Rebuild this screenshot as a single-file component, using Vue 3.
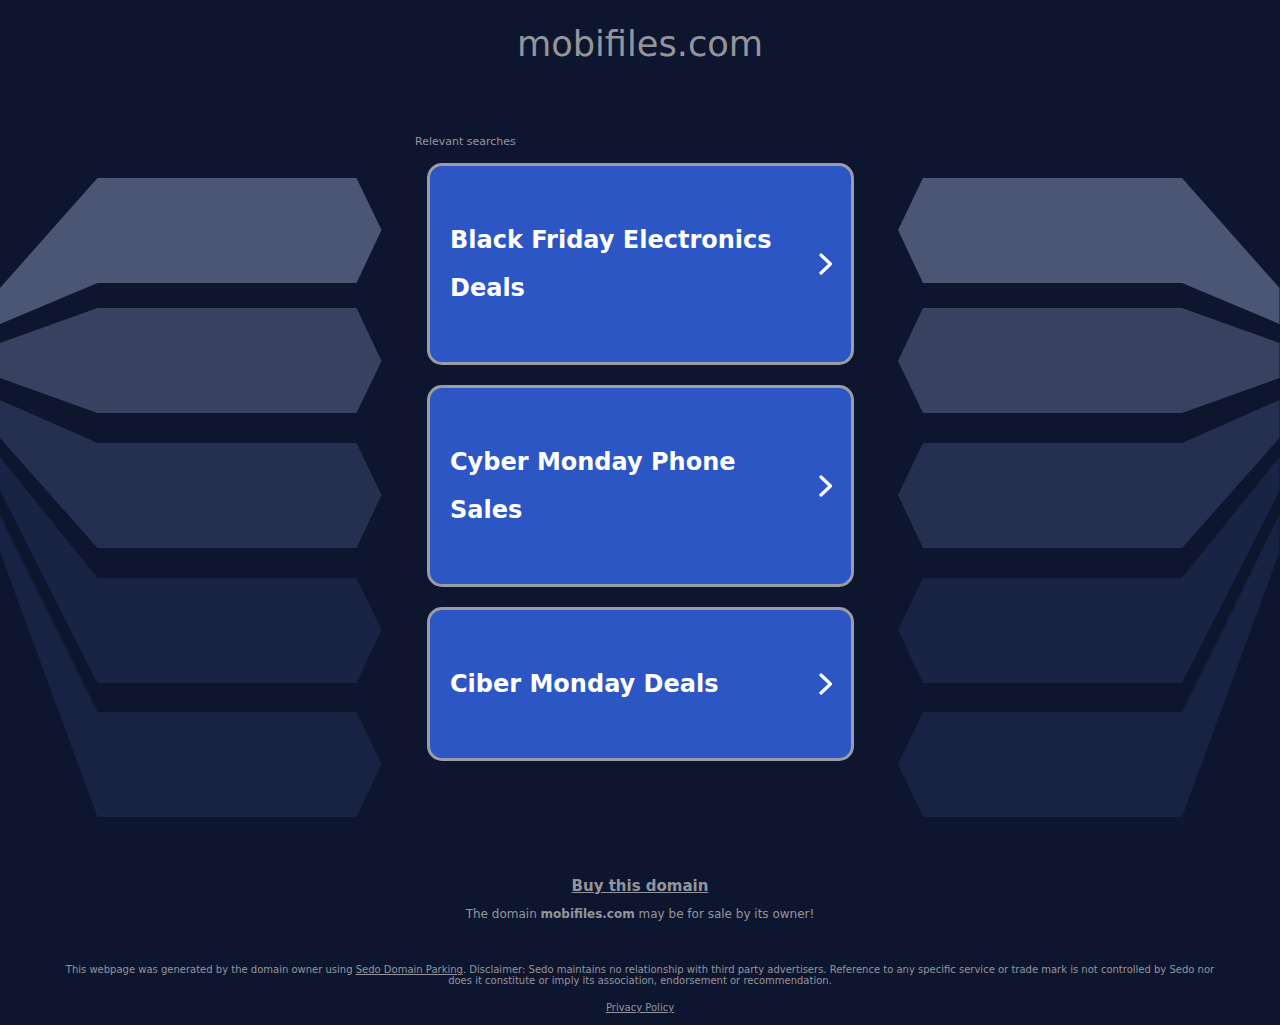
<template>
  <div class="page">
    <svg class="bg" width="1280" height="1025" viewBox="0 0 1280 1025" aria-hidden="true">
      <g v-for="side in sides" :key="side" :transform="side">
        <polygon
          v-for="shape in shapes"
          :key="shape.fill"
          :points="shape.points"
          :fill="shape.fill"
        />
      </g>
    </svg>

    <div class="content">
      <h1 class="domain">mobifiles.com</h1>

      <div class="searches">
        <p class="searches__label">Relevant searches</p>
        <ul class="searches__list">
          <li v-for="item in links" :key="item" class="card">
            <span class="card__text">{{ item }}</span>
            <svg class="card__arrow" width="16" height="22" viewBox="0 0 16 22">
              <path d="M3 2 L12.5 11 L3 20" fill="none" stroke="#fff" stroke-width="3.2" stroke-linecap="round" stroke-linejoin="round" />
            </svg>
          </li>
        </ul>
      </div>

      <div class="offer">
        <a class="offer__buy" href="#">Buy this domain</a>
        <p class="offer__text">The domain <b>mobifiles.com</b> may be for sale by its owner!</p>
      </div>

      <footer class="foot">
        <p class="foot__text">
          This webpage was generated by the domain owner using <a href="#">Sedo Domain Parking</a>. Disclaimer: Sedo maintains no relationship with third party advertisers. Reference to any specific service or trade mark is not controlled by Sedo nor does it constitute or imply its association, endorsement or recommendation.
        </p>
        <a class="foot__privacy" href="#">Privacy Policy</a>
      </footer>
    </div>
  </div>
</template>

<script setup>
const sides = ['', 'translate(1279.5 0) scale(-1 1)']

const shapes = [
  { fill: '#182343', points: '0,515 97.5,712 356.5,712 381.5,764 356.5,817 97.5,817 0,552' },
  { fill: '#192445', points: '0,457 97.5,578 356.5,578 381.5,630 356.5,683 97.5,683 0,491' },
  { fill: '#252f4f', points: '0,400 97.5,443 356.5,443 381.5,495 356.5,548 97.5,548 0,438' },
  { fill: '#384260', points: '0,343 97.5,308 356.5,308 381.5,361 356.5,413 97.5,413 0,378' },
  { fill: '#4b5674', points: '0,288 97.5,178 356.5,178 381.5,230 356.5,283 97.5,283 0,324' }
]

const links = ['Black Friday Electronics Deals', 'Cyber Monday Phone Sales', 'Ciber Monday Deals']
</script>

<style scoped>
.page {
  position: relative;
  width: 1280px;
  height: 1025px;
  overflow: hidden;
  background: #0e162f;
  font-family: "DejaVu Sans", sans-serif;
  color: #94959c;
}

.bg {
  position: absolute;
  top: 0;
  left: 0;
}

.content {
  position: relative;
  display: flex;
  flex-direction: column;
  align-items: center;
}

.domain {
  margin: 22px 0 0;
  font-size: 35.2px;
  font-weight: 400;
  line-height: 44px;
  color: #94959c;
}

.searches {
  width: 450px;
  margin-top: 69px;
}

.searches__label {
  margin: 0;
  font-size: 11px;
  line-height: 13px;
}

.searches__list {
  list-style: none;
  margin: 15px 0 0 12px;
  padding: 0;
  width: 427px;
  display: flex;
  flex-direction: column;
  gap: 20px;
}

.card {
  display: flex;
  align-items: center;
  justify-content: space-between;
  box-sizing: border-box;
  padding: 50px 20px;
  background: #2b56c4;
  border: 3px solid #9a9ca6;
  border-radius: 15px;
}

.card__text {
  width: 340px;
  font-size: 24px;
  font-weight: 700;
  line-height: 48px;
  color: #fff;
}

.card__arrow {
  margin-right: -3px;
}

.offer {
  margin-top: 116px;
  text-align: center;
}

.offer__buy {
  display: block;
  font-size: 15px;
  font-weight: 700;
  line-height: 19px;
  color: #94959c;
}

.offer__text {
  margin: 11px 0 0;
  font-size: 12px;
  line-height: 14px;
}

.foot {
  width: 1160px;
  margin-top: 43px;
  text-align: center;
  font-size: 10px;
  line-height: 11px;
}

.foot__text {
  margin: 0;
}

.foot a {
  color: #94959c;
}

.foot__privacy {
  display: block;
  margin-top: 16px;
}
</style>
